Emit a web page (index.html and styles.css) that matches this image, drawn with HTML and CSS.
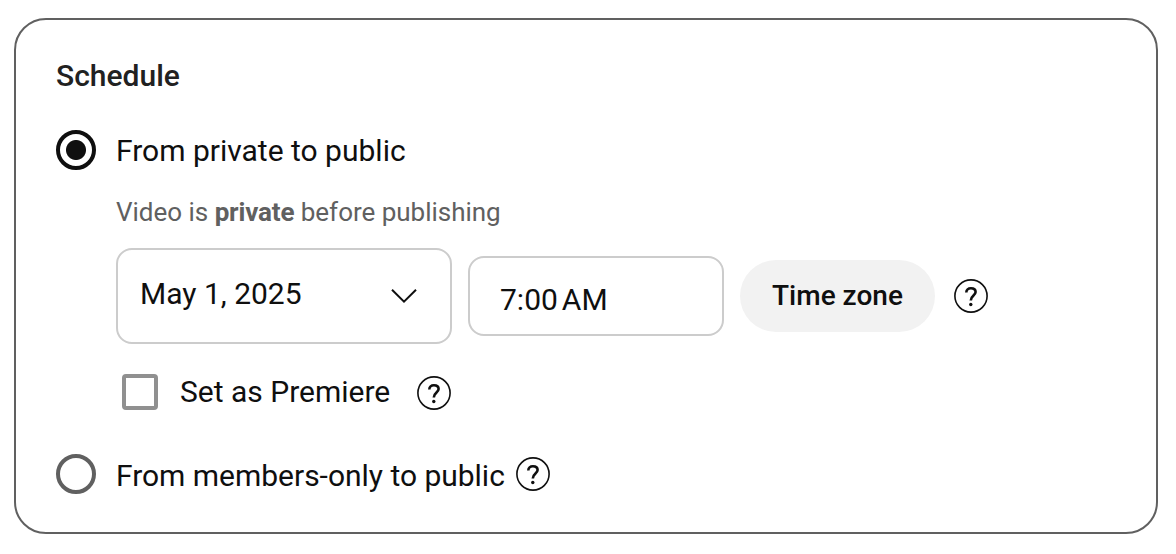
FILE: index.html
```
<!DOCTYPE html>
<html lang="en">
<head>
    <meta charset="UTF-8">
    <meta name="viewport" content="width=device-width, initial-scale=1.0">
    <title>Schedule</title>
    <link rel="stylesheet" href="styles.css">
</head>
<body>
    <div class="card">
        <h2 class="title">Schedule</h2>

        <div class="option">
            <span class="radio checked"></span>
            <span class="label label-private">From private to public</span>
        </div>

        <div class="details">
            <p class="hint">Video is <b>private</b> before publishing</p>
            <div class="fields">
                <div class="date">
                    <span class="date-text">May 1, 2025</span>
                    <svg class="arrow" width="28" height="18" viewBox="0 0 28 18">
                        <path d="M2 2.7 L14 14.7 L26 2.7" fill="none" stroke="#0f0f0f" stroke-width="2"/>
                    </svg>
                </div>
                <div class="time">7:00<span class="ampm">AM</span></div>
                <button class="zone">Time zone</button>
                <svg class="help help-zone" viewBox="0 0 34 34">
                    <circle cx="17" cy="17" r="16.1" fill="none" stroke="#0f0f0f" stroke-width="1.6"/>
                    <path d="M12.3 13.6 C12.3 10.8 14.2 9.3 16.9 9.3 C19.7 9.3 21.6 10.8 21.6 13.1 C21.6 16.4 16.8 16.8 16.8 21.4" fill="none" stroke="#0f0f0f" stroke-width="2.6"/>
                    <circle cx="16.8" cy="25.5" r="1.7" fill="#0f0f0f"/>
                </svg>
            </div>
            <div class="premiere">
                <span class="checkbox"></span>
                <span class="label label-premiere">Set as Premiere</span>
                <svg class="help help-premiere" viewBox="0 0 34 34">
                    <circle cx="17" cy="17" r="16.1" fill="none" stroke="#0f0f0f" stroke-width="1.6"/>
                    <path d="M12.3 13.6 C12.3 10.8 14.2 9.3 16.9 9.3 C19.7 9.3 21.6 10.8 21.6 13.1 C21.6 16.4 16.8 16.8 16.8 21.4" fill="none" stroke="#0f0f0f" stroke-width="2.6"/>
                    <circle cx="16.8" cy="25.5" r="1.7" fill="#0f0f0f"/>
                </svg>
            </div>
        </div>

        <div class="option option-members">
            <span class="radio"></span>
            <span class="label label-members">From members-only to public</span>
            <svg class="help" viewBox="0 0 34 34">
                <circle cx="17" cy="17" r="16.1" fill="none" stroke="#0f0f0f" stroke-width="1.6"/>
                <path d="M12.3 13.6 C12.3 10.8 14.2 9.3 16.9 9.3 C19.7 9.3 21.6 10.8 21.6 13.1 C21.6 16.4 16.8 16.8 16.8 21.4" fill="none" stroke="#0f0f0f" stroke-width="2.6"/>
                <circle cx="16.8" cy="25.5" r="1.7" fill="#0f0f0f"/>
            </svg>
        </div>
    </div>
</body>
</html>
```
FILE: styles.css
```
* {
    box-sizing: border-box;
}
body {
    font-family: Roboto, Arial, sans-serif;
    margin: 0;
    padding: 18px 18px 20px 14px;
    background: #fff;
    color: #0f0f0f;
    font-size: 30px;
}
.card {
    height: 516px;
    border: 2px solid #606060;
    border-radius: 32px;
    padding: 32px 40px;
}
.title {
    margin: 0;
    font-size: 30px;
    font-weight: 500;
    line-height: 48px;
    color: #212121;
}
.option {
    display: flex;
    align-items: center;
    height: 40px;
    margin-top: 30px;
}
.option-members {
    margin-top: 44px;
}
.radio {
    width: 40px;
    height: 40px;
    margin-right: 20px;
    border: 4px solid #606060;
    border-radius: 50%;
}
.radio.checked {
    border-color: #0f0f0f;
    background: radial-gradient(circle, #0f0f0f 9.5px, transparent 10.5px);
}
.label {
    line-height: 40px;
    white-space: nowrap;
}
.label-private {
    padding-top: 2px;
}
.label-members {
    width: 400px;
    padding-top: 3px;
    letter-spacing: -0.02px;
}
.details {
    margin-left: 60px;
}
.hint {
    margin: 22px 0 16px;
    font-size: 26px;
    line-height: 40px;
    letter-spacing: -0.02px;
    color: #606060;
}
.hint b {
    letter-spacing: -0.15px;
}
.fields {
    display: flex;
    align-items: center;
    gap: 16px;
}
.date {
    display: flex;
    align-items: center;
    justify-content: space-between;
    width: 336px;
    height: 96px;
    padding: 0 32px 0 22px;
    border: 2px solid #ccc;
    border-radius: 16px;
}
.date-text {
    padding-bottom: 6px;
}
.time {
    width: 256px;
    height: 80px;
    padding: 4px 30px 0;
    border: 2px solid #ccc;
    border-radius: 16px;
    line-height: 76px;
}
.ampm {
    margin-left: 4px;
}
.zone {
    width: 195px;
    height: 72px;
    padding: 0 0 2px;
    border: none;
    border-radius: 36px;
    background: #f2f2f2;
    color: #0f0f0f;
    font-family: inherit;
    font-size: 28px;
    font-weight: 500;
}
.help {
    flex: none;
    width: 34px;
    height: 34px;
}
.help-zone {
    margin-left: 3px;
}
.premiere {
    display: flex;
    align-items: center;
    height: 36px;
    margin-top: 30px;
    padding-left: 6px;
}
.checkbox {
    width: 36px;
    height: 36px;
    border: 4px solid #909090;
    border-radius: 4px;
}
.label-premiere {
    width: 259px;
    padding-left: 22px;
}
.help-premiere {
    margin-top: 2px;
}
```
